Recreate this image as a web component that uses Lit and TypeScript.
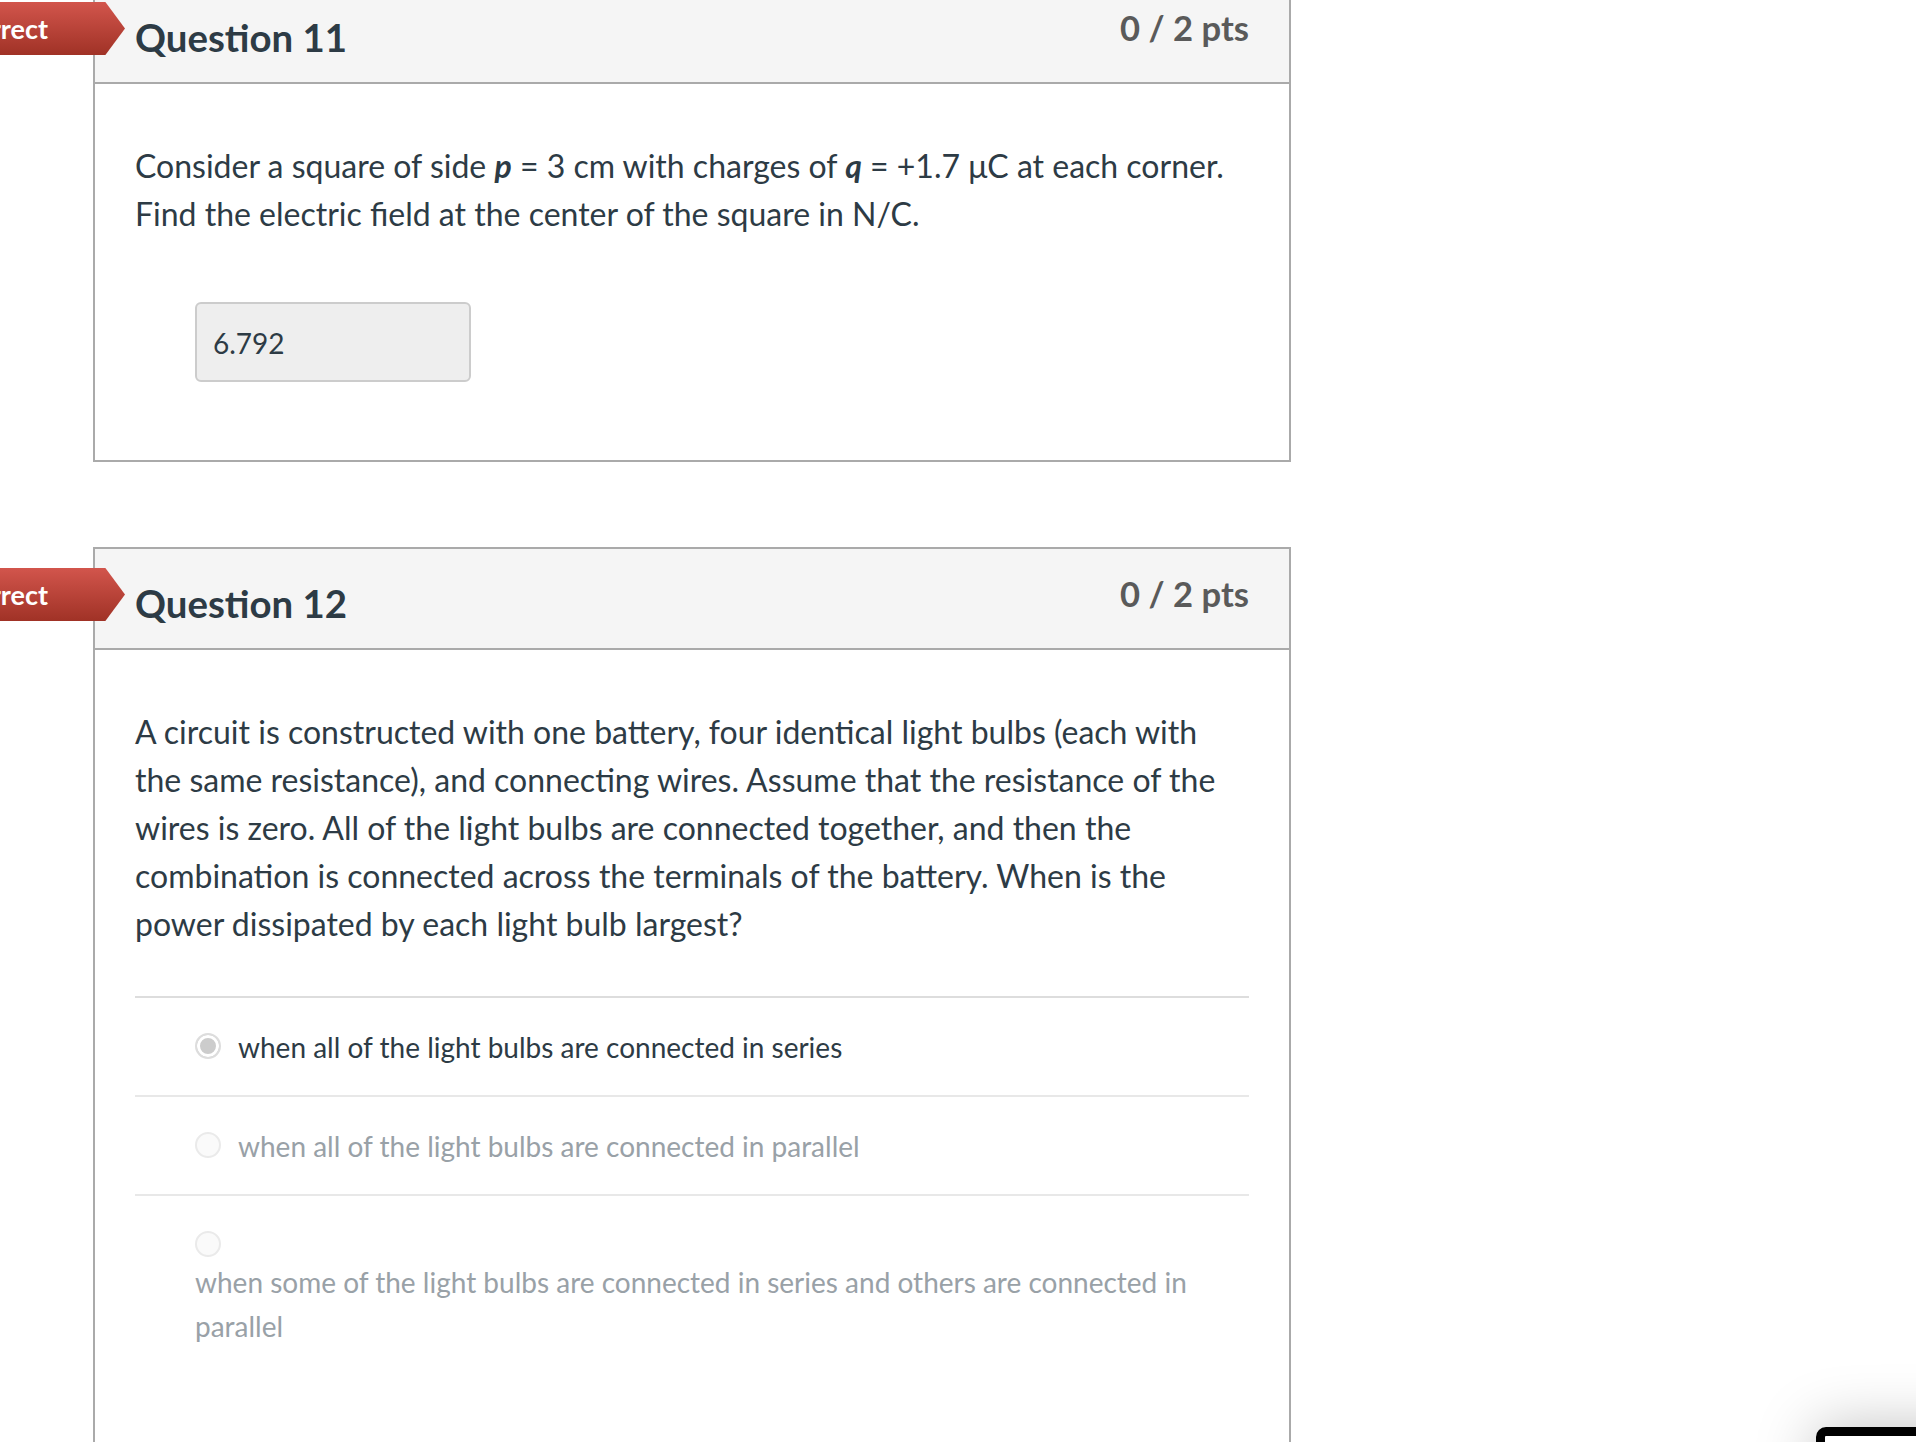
import { LitElement, html, css } from 'lit';
import { customElement } from 'lit/decorators.js';

@customElement('app-root')
export class AppRoot extends LitElement {
  static styles = css`
    :host {
      display: block;
      position: relative;
      height: 1442px;
      overflow: hidden;
      background: #fff;
      font-family: Lato, sans-serif;
      color: #2d3b45;
      font-variant-ligatures: common-ligatures;
    }
    .list {
      width: 1198px;
      margin: -19px 0 0 93px;
      display: flex;
      flex-direction: column;
      gap: 85px;
    }
    .card {
      position: relative;
      border: 2px solid #aaa;
    }
    .badge {
      position: absolute;
      top: 19px;
      right: calc(100% - 30px);
      width: 140px;
      height: 53px;
      box-sizing: border-box;
      padding: 0 77px 1px 0;
      display: flex;
      align-items: center;
      justify-content: flex-end;
      color: #fff;
      font-size: 27px;
      font-weight: 700;
      background: linear-gradient(#d2554c, #a03226);
      clip-path: polygon(0 0, 86% 0, 100% 50%, 86% 100%, 0 100%);
    }
    .head {
      height: 101px;
      box-sizing: border-box;
      padding: 0 40px;
      display: flex;
      justify-content: space-between;
      background: #f5f5f5;
      border-bottom: 2px solid #aaa;
    }
    .title {
      margin: 30px 0 0;
      font-size: 38.4px;
      line-height: 48px;
      font-weight: 700;
    }
    .pts {
      margin-top: 24px;
      font-size: 34.6px;
      line-height: 42px;
      font-weight: 700;
      color: #5a5a5a;
    }
    .body {
      padding: 58px 40px 120px;
    }
    .body.short {
      padding-bottom: 78px;
    }
    .text {
      margin: 0;
      font-size: 32px;
      line-height: 48px;
    }
    .input {
      width: 276px;
      height: 80px;
      box-sizing: border-box;
      margin: 64px 0 0 60px;
      padding: 2px 16px 0;
      display: flex;
      align-items: center;
      font-size: 28px;
      background: #eee;
      border: 2px solid #ccc;
      border-radius: 6px;
    }
    .answers {
      margin-top: 48px;
    }
    .row {
      height: 99px;
      box-sizing: border-box;
      border-top: 2px solid #e8e8e8;
      padding-left: 60px;
      display: flex;
      align-items: center;
      gap: 17px;
      font-size: 28px;
      color: #99a1a7;
    }
    .row.first {
      border-top-color: #ddd;
      color: #2d3b45;
    }
    .row.wrap {
      display: block;
      height: auto;
      padding-top: 35px;
    }
    .radio {
      width: 26px;
      height: 26px;
      box-sizing: border-box;
      flex: none;
      border-radius: 50%;
      border: 2px solid #eaeaea;
      background: #fafafa;
      margin-top: -2px;
    }
    .radio.on {
      border-color: #ddd;
      background: #ccc;
      box-shadow: inset 0 0 0 3px #fff;
    }
    .wrap .radio {
      display: block;
      margin: 0 0 3px;
    }
    .wrap p {
      margin: 0;
      line-height: 44px;
    }
    .popup {
      position: absolute;
      left: 1816px;
      top: 1427px;
      width: 200px;
      height: 100px;
      box-sizing: border-box;
      background: #fff;
      border: 9px solid #000;
      border-radius: 10px;
      box-shadow: 0 0 60px rgba(0, 0, 0, 0.25);
    }
  `;

  render() {
    return html`
      <div class="list">
        <section class="card">
          <div class="badge">Incorrect</div>
          <div class="head">
            <h2 class="title">Question 11</h2>
            <div class="pts">0 / 2 pts</div>
          </div>
          <div class="body short">
            <p class="text">
              Consider a square of side <b><i>p</i></b> = 3 cm with charges of <b><i>q</i></b> = +1.7 μC at each corner.
              Find the electric field at the center of the square in N/C.
            </p>
            <div class="input">6.792</div>
          </div>
        </section>
        <section class="card">
          <div class="badge">Incorrect</div>
          <div class="head">
            <h2 class="title">Question 12</h2>
            <div class="pts">0 / 2 pts</div>
          </div>
          <div class="body">
            <p class="text">
              A circuit is constructed with one battery, four identical light bulbs (each with the same resistance), and
              connecting wires. Assume that the resistance of the wires is zero. All of the light bulbs are connected
              together, and then the combination is connected across the terminals of the battery. When is the power
              dissipated by each light bulb largest?
            </p>
            <div class="answers">
              <div class="row first">
                <span class="radio on"></span>
                <span>when all of the light bulbs are connected in series</span>
              </div>
              <div class="row">
                <span class="radio"></span>
                <span>when all of the light bulbs are connected in parallel</span>
              </div>
              <div class="row wrap">
                <span class="radio"></span>
                <p>when some of the light bulbs are connected in series and others are connected in parallel</p>
              </div>
            </div>
          </div>
        </section>
      </div>
      <div class="popup"></div>
    `;
  }
}
